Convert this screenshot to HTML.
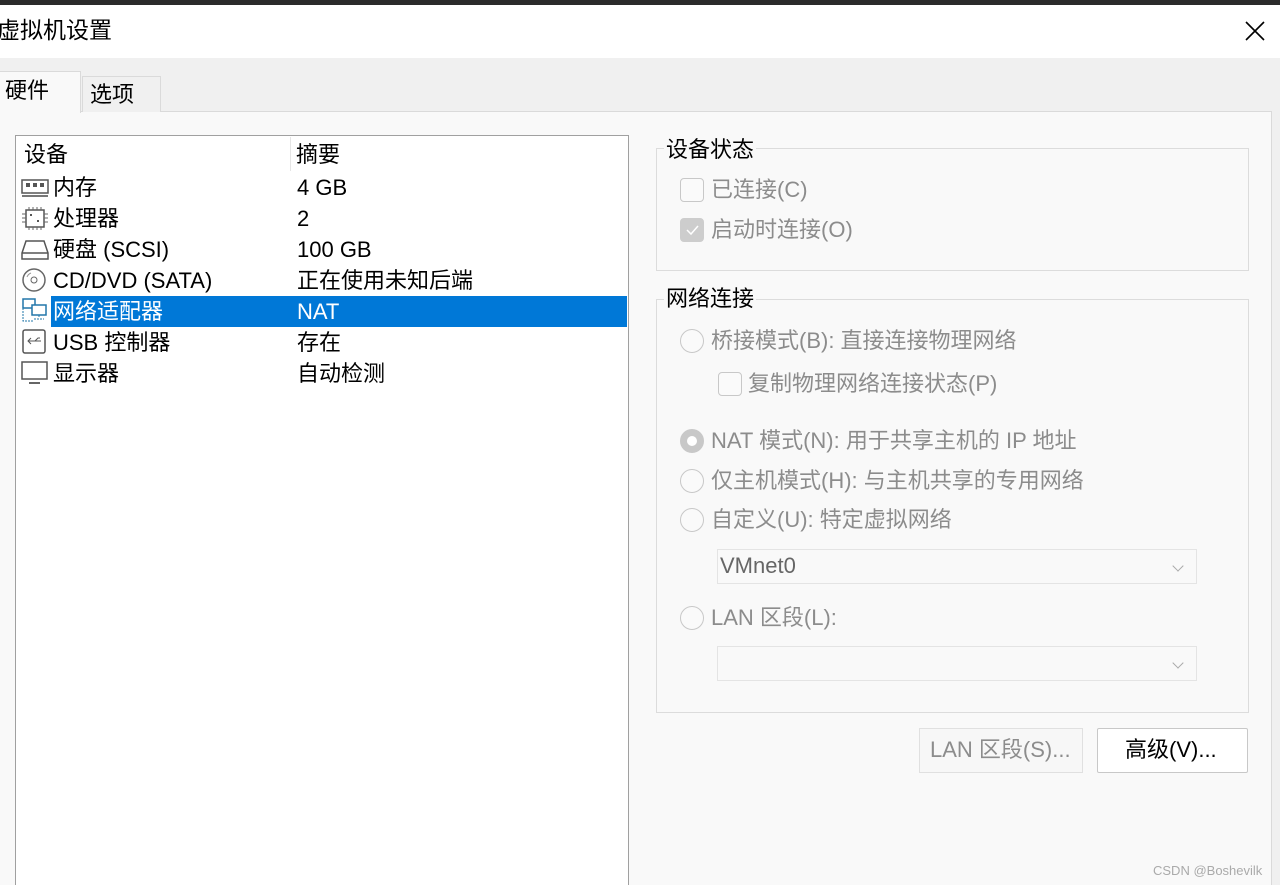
<!DOCTYPE html>
<html><head><meta charset="utf-8"><style>
*{margin:0;padding:0;box-sizing:border-box}
html,body{width:1280px;height:885px;overflow:hidden}
body{background:#f0f0f0;font-family:"Liberation Sans","Noto Sans CJK SC",sans-serif;font-size:22px;color:#000;position:relative}
.a{position:absolute;white-space:nowrap;line-height:26px}
.dis{color:#8c8c8c}
.cb{position:absolute;width:24px;height:24px;border:1px solid #c8c8c8;border-radius:4px;background:#fafafa}
.rb{position:absolute;width:24px;height:24px;border:1.5px solid #c8c8c8;border-radius:50%;background:#fafafa}
.grp{position:absolute;border:1px solid #dcdcdc}
.gl{position:absolute;background:#f9f9f9;padding:0 2px;line-height:26px}
.combo{position:absolute;border:1px solid #e4e4e4;background:#f9f9f9}
.combo:after{content:"";position:absolute;right:14px;top:12px;width:7px;height:7px;border-right:1px solid #aaa;border-bottom:1px solid #aaa;transform:rotate(45deg)}
.row{position:absolute;left:18px;height:31px;line-height:31px;width:608px}
.row .n{position:absolute;left:35px}.row .v{position:absolute;left:279px}
.ic{position:absolute;left:3px;top:5px}
</style></head><body>
<div class="a" style="left:0;top:0;width:1280px;height:5px;background:#2b2b2b"></div>
<div class="a" style="left:0;top:5px;width:1280px;height:53px;background:#fff"></div>
<div class="a" style="left:-3px;top:17px;font-size:23px">虚拟机设置</div>
<svg class="a" style="left:1244px;top:20px" width="22" height="22"><path d="M2 2L20 20M20 2L2 20" stroke="#000" stroke-width="1.6"/></svg>
<div class="a" style="left:0;top:111px;width:1272px;height:774px;background:#f9f9f9;border-top:1px solid #dadada;border-right:1px solid #dadada"></div>
<div class="a" style="left:82px;top:76px;width:79px;height:36px;background:#f0f0f0;border:1px solid #dadada;border-bottom:none"></div>
<div class="a" style="left:90px;top:82px">选项</div>
<div class="a" style="left:0;top:71px;width:81px;height:42px;background:#f9f9f9;border-right:1px solid #dadada;border-top:1px solid #dadada"></div>
<div class="a" style="left:5px;top:78px">硬件</div>
<div class="a" style="left:15px;top:135px;width:614px;height:750px;background:#fff;border:1px solid #a0a0a0;border-bottom:none"></div>
<div class="a" style="left:290px;top:137px;width:1px;height:34px;background:#e5e5e5"></div>
<div class="a" style="left:24px;top:142px">设备</div>
<div class="a" style="left:296px;top:142px">摘要</div>
<div class="a" style="left:51px;top:296px;width:576px;height:31px;background:#0078d7"></div>
<div class="row" style="top:172px"><svg class="ic" width="28" height="22"><rect x="1" y="3" width="26" height="13" fill="none" stroke="#555" stroke-width="1.5"/><rect x="5" y="6" width="4" height="4" fill="#555"/><rect x="12" y="6" width="4" height="4" fill="#555"/><rect x="19" y="6" width="4" height="4" fill="#555"/><path d="M1 19H27" stroke="#777" stroke-width="2"/></svg><span class="n">内存</span><span class="v">4 GB</span></div>
<div class="row" style="top:203px"><svg class="ic" width="28" height="24" style="top:3px"><rect x="5" y="4" width="18" height="17" fill="none" stroke="#555" stroke-width="1.5"/><path d="M8 1v3M12 1v3M16 1v3M20 1v3M8 21v3M12 21v3M16 21v3M20 21v3M1 8h4M1 12h4M1 16h4M23 8h4M23 12h4M23 16h4" stroke="#666"/><rect x="9" y="8" width="2" height="2" fill="#555"/><rect x="16" y="14" width="2" height="2" fill="#555"/></svg><span class="n">处理器</span><span class="v">2</span></div>
<div class="row" style="top:234px"><svg class="ic" width="28" height="22"><path d="M5 2H23L27 14V20H1V14Z M1 14H27" fill="none" stroke="#555" stroke-width="1.5"/></svg><span class="n">硬盘 (SCSI)</span><span class="v">100 GB</span></div>
<div class="row" style="top:265px"><svg class="ic" width="28" height="24" style="top:3px"><circle cx="13" cy="12" r="11" fill="none" stroke="#666" stroke-width="1.5"/><circle cx="13" cy="12" r="3" fill="none" stroke="#666"/><path d="M6 9a7 7 0 0 1 4-4" stroke="#999" fill="none"/></svg><span class="n">CD/DVD (SATA)</span><span class="v">正在使用未知后端</span></div>
<div class="row" style="top:296px;color:#fff"><svg class="ic" width="30" height="26" style="top:2px"><rect x="2" y="1" width="12" height="9" fill="#fff" stroke="#27a" stroke-width="1.5"/><rect x="11" y="7" width="14" height="10" fill="#fff" stroke="#27a" stroke-width="1.5"/><path d="M18 17v3M13 21h10M2 10v13h10" stroke="#27a" stroke-dasharray="2 1" fill="none"/></svg><span class="n">网络适配器</span><span class="v">NAT</span></div>
<div class="row" style="top:327px"><svg class="ic" width="28" height="26" style="top:2px"><rect x="2" y="1" width="22" height="23" rx="2" fill="none" stroke="#555" stroke-width="1.5"/><path d="M7 12h13M10 9l-3 3 3 3M14 12l3-3h2" stroke="#555" fill="none"/></svg><span class="n">USB 控制器</span><span class="v">存在</span></div>
<div class="row" style="top:358px"><svg class="ic" width="28" height="24" style="top:3px"><rect x="1" y="1" width="25" height="17" fill="none" stroke="#555" stroke-width="1.5"/><path d="M8 22h11" stroke="#666" stroke-width="2"/></svg><span class="n">显示器</span><span class="v">自动检测</span></div>
<div class="grp" style="left:656px;top:148px;width:593px;height:123px"></div>
<div class="gl" style="left:664px;top:137px">设备状态</div>
<div class="cb" style="left:680px;top:178px"></div>
<div class="a dis" style="left:711px;top:177px">已连接(C)</div>
<div class="cb" style="left:680px;top:218px;background:#cdcdcd;border-color:#cdcdcd"><svg width="22" height="22"><path d="M6 11l4 4 7-8" stroke="#fff" stroke-width="1.5" fill="none"/></svg></div>
<div class="a dis" style="left:711px;top:217px">启动时连接(O)</div>
<div class="grp" style="left:656px;top:299px;width:593px;height:414px"></div>
<div class="gl" style="left:664px;top:286px">网络连接</div>
<div class="rb" style="left:680px;top:329px"></div>
<div class="a dis" style="left:711px;top:328px">桥接模式(B): 直接连接物理网络</div>
<div class="cb" style="left:718px;top:372px"></div>
<div class="a dis" style="left:748px;top:371px">复制物理网络连接状态(P)</div>
<div class="rb" style="left:680px;top:429px;border:7px solid #c8c8c8;background:#fff"></div>
<div class="a dis" style="left:711px;top:428px">NAT 模式(N): 用于共享主机的 IP 地址</div>
<div class="rb" style="left:680px;top:469px"></div>
<div class="a dis" style="left:711px;top:468px">仅主机模式(H): 与主机共享的专用网络</div>
<div class="rb" style="left:680px;top:508px"></div>
<div class="a dis" style="left:711px;top:507px">自定义(U): 特定虚拟网络</div>
<div class="combo" style="left:717px;top:549px;width:480px;height:35px"></div>
<div class="a" style="left:720px;top:553px;color:#666">VMnet0</div>
<div class="rb" style="left:680px;top:606px"></div>
<div class="a dis" style="left:711px;top:605px">LAN 区段(L):</div>
<div class="combo" style="left:717px;top:646px;width:480px;height:35px"></div>
<div class="a" style="left:919px;top:728px;width:164px;height:45px;border:1px solid #e0e0e0;background:#f7f7f7"></div>
<div class="a dis" style="left:930px;top:737px">LAN 区段(S)...</div>
<div class="a" style="left:1097px;top:728px;width:151px;height:45px;border:1px solid #c8c8c8;background:#fff;border-radius:2px"></div>
<div class="a" style="left:1125px;top:737px">高级(V)...</div>
<div class="a" style="left:1153px;top:858px;font-size:13px;color:#aaa">CSDN @Boshevilk</div>
</body></html>
